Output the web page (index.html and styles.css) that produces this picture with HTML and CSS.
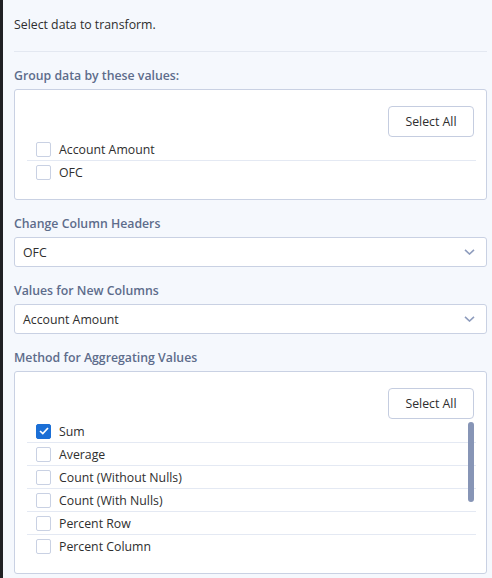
FILE: index.html
```html
<!DOCTYPE html>
<html lang="en">
<head>
  <meta charset="UTF-8">
  <title>Pivot - Transform Data</title>
  <link rel="stylesheet" href="styles.css">
</head>
<body>

  <div class="panel">
    <p class="intro">Select data to transform.</p>
    <hr class="divider">

    <div class="field">
      <label class="field-label">Group data by these values:</label>
      <div class="check-box">
        <div class="box-actions">
          <button class="select-all">Select All</button>
        </div>
        <ul class="check-list">
          <li class="check-row"><span class="check"></span>Account Amount</li>
          <li class="check-row"><span class="check"></span>OFC</li>
        </ul>
      </div>
    </div>

    <div class="field">
      <label class="field-label">Change Column Headers</label>
      <div class="select">
        <span>OFC</span>
        <svg class="chevron" width="11" height="6" viewBox="0 0 11 6"><path d="M1 0.8 L5.5 5 L10 0.8" fill="none" stroke="#8e9cbd" stroke-width="1.6"/></svg>
      </div>
    </div>

    <div class="field">
      <label class="field-label">Values for New Columns</label>
      <div class="select">
        <span>Account Amount</span>
        <svg class="chevron" width="11" height="6" viewBox="0 0 11 6"><path d="M1 0.8 L5.5 5 L10 0.8" fill="none" stroke="#8e9cbd" stroke-width="1.6"/></svg>
      </div>
    </div>

    <div class="field">
      <label class="field-label">Method for Aggregating Values</label>
      <div class="check-box">
        <div class="box-actions">
          <button class="select-all">Select All</button>
        </div>
        <div class="scroll-wrap">
          <ul class="check-list scroll-list">
            <li class="check-row"><span class="check checked"><svg width="10" height="8" viewBox="0 0 10 8"><path d="M1 4 L3.8 6.6 L9 1" fill="none" stroke="#fff" stroke-width="1.7"/></svg></span>Sum</li>
            <li class="check-row"><span class="check"></span>Average</li>
            <li class="check-row"><span class="check"></span>Count (Without Nulls)</li>
            <li class="check-row"><span class="check"></span>Count (With Nulls)</li>
            <li class="check-row"><span class="check"></span>Percent Row</li>
            <li class="check-row"><span class="check"></span>Percent Column</li>
          </ul>
          <div class="scroll-thumb"></div>
        </div>
      </div>
    </div>
  </div>

</body>
</html>
```

FILE: styles.css
```css
* {
  margin: 0;
  padding: 0;
  box-sizing: border-box;
}

body {
  background-color: #f5f8fd;
  font-family: "Open Sans", "Noto Sans", sans-serif;
  font-size: 12.3px;
  color: #2e2e2e;
}

.panel {
  min-height: 578px;
  border-left: 3px solid #202124;
  padding: 16px 5px 0 11px;
}

.intro {
  line-height: 18px;
}

.divider {
  border: none;
  border-top: 1px solid #e3e8f1;
  margin: 17px 0 15px;
}

.field {
  margin-top: 15px;
}

.divider + .field {
  margin-top: 0;
}

.field-label {
  display: block;
  line-height: 18px;
  margin-bottom: 4px;
  font-weight: 600;
  color: #5d6c8b;
}

.check-box {
  background-color: #ffffff;
  border: 1px solid #c9d1e3;
  border-radius: 3px;
  padding: 16px 10px 15px 12px;
}

.box-actions {
  display: flex;
  justify-content: flex-end;
  padding-right: 2px;
}

.select-all {
  width: 86px;
  height: 31px;
  background-color: #ffffff;
  border: 1px solid #c5cde0;
  border-radius: 4px;
  font-family: inherit;
  font-size: 12.3px;
  color: #2e2e2e;
}

.check-list {
  list-style: none;
  margin-top: 1px;
}

.check-row {
  display: flex;
  align-items: center;
  height: 23px;
  padding-left: 9px;
  border-bottom: 1px solid #e4e9f3;
}

.check-list .check-row:last-child {
  border-bottom: none;
}

.check {
  width: 15px;
  height: 15px;
  margin-right: 8px;
  border: 1.5px solid #c9d1e3;
  border-radius: 2px;
  background-color: #ffffff;
  display: flex;
  align-items: center;
  justify-content: center;
}

.check.checked {
  background-color: #1b6fd6;
  border-color: #1b6fd6;
}

.scroll-wrap {
  position: relative;
}

.scroll-thumb {
  position: absolute;
  top: 2px;
  right: 2px;
  width: 6px;
  height: 80px;
  border-radius: 3px;
  background-color: #8795b6;
}

.select {
  display: flex;
  justify-content: space-between;
  align-items: center;
  height: 30px;
  background-color: #ffffff;
  border: 1px solid #c9d1e3;
  border-radius: 3px;
  padding: 0 11px 0 8px;
}
```
